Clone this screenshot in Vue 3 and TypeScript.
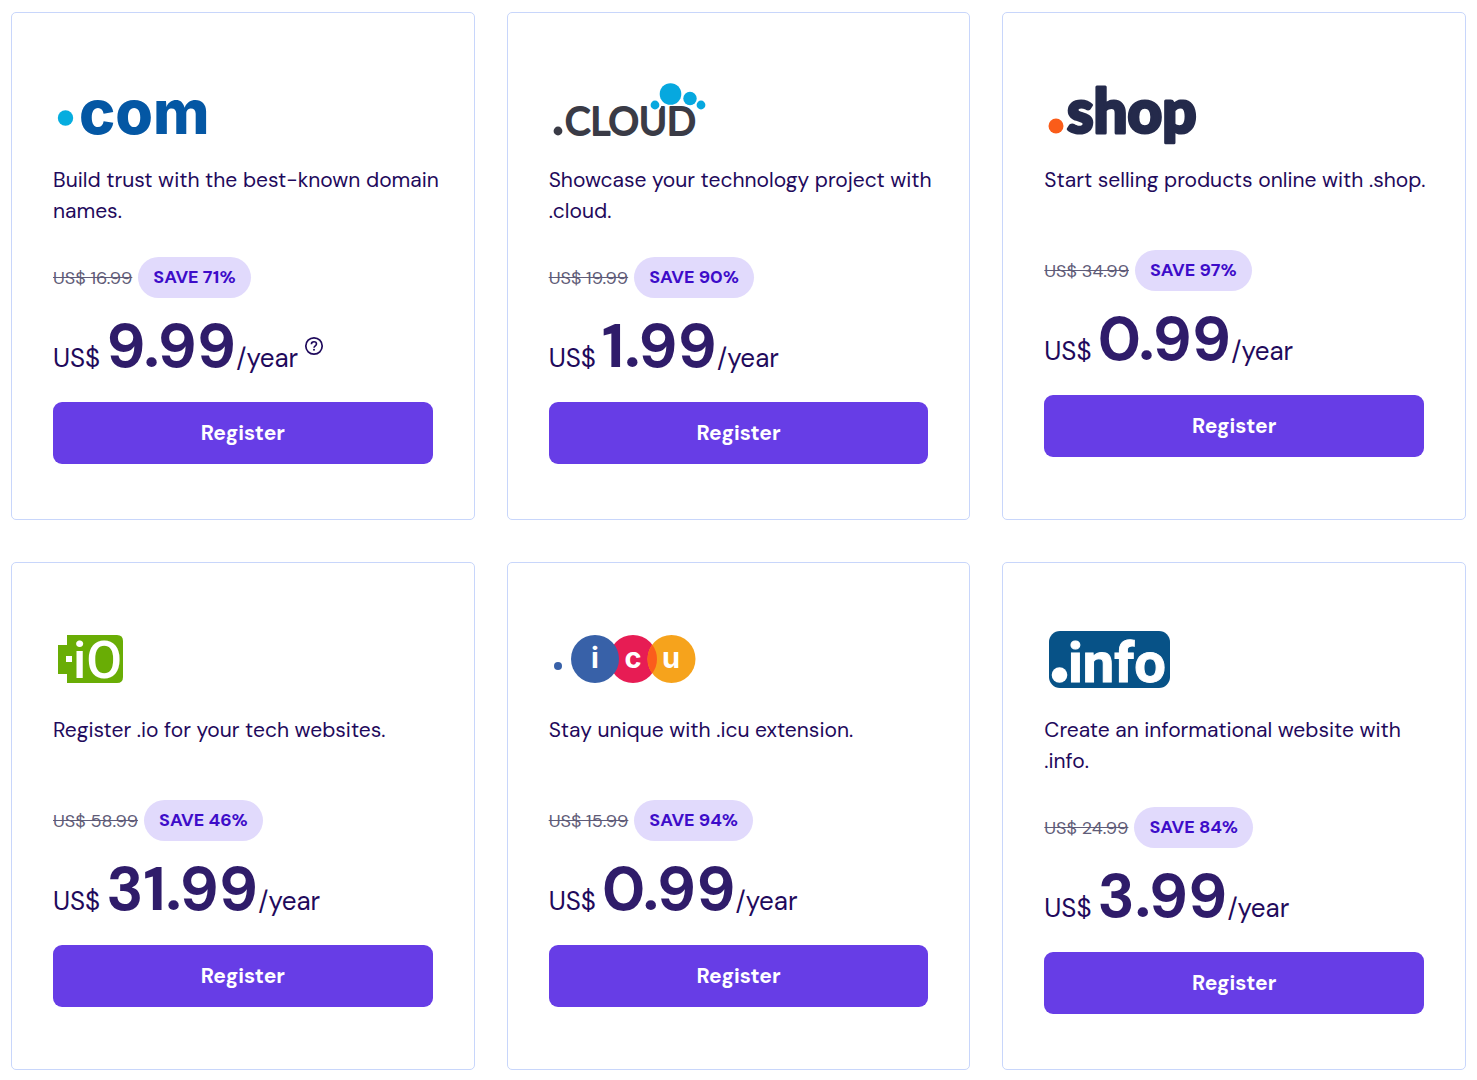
<script setup lang="ts">
interface Offer {
  tld: string
  text: string
  oldPrice: string
  save: string
  price: string
  help?: boolean
}

const offers: Offer[] = [
  { tld: 'com', text: 'Build trust with the best-known domain names.', oldPrice: '16.99', save: '71', price: '9.99', help: true },
  { tld: 'cloud', text: 'Showcase your technology project with .cloud.', oldPrice: '19.99', save: '90', price: '1.99' },
  { tld: 'shop', text: 'Start selling products online with .shop.', oldPrice: '34.99', save: '97', price: '0.99' },
  { tld: 'io', text: 'Register .io for your tech websites.', oldPrice: '58.99', save: '46', price: '31.99' },
  { tld: 'icu', text: 'Stay unique with .icu extension.', oldPrice: '15.99', save: '94', price: '0.99' },
  { tld: 'info', text: 'Create an informational website with .info.', oldPrice: '24.99', save: '84', price: '3.99' },
]
</script>

<template>
  <main class="grid">
    <article v-for="offer in offers" :key="offer.tld" class="card">
      <svg class="logo" viewBox="0 0 200 74" role="img" :aria-label="'.' + offer.tld">
        <g v-if="offer.tld === 'com'">
          <circle cx="12.5" cy="38" r="7.7" fill="#06addf" />
          <text x="26" y="54" class="logo-com">com</text>
        </g>
        <g v-else-if="offer.tld === 'cloud'">
          <circle cx="9" cy="51" r="4.4" fill="#3a3b46" />
          <text x="16" y="55" class="logo-cloud">CLOUD</text>
          <circle cx="106" cy="25" r="5.4" fill="#06a8df" stroke="#fff" stroke-width="2" />
          <circle cx="121.5" cy="14" r="10.8" fill="#06a8df" />
          <circle cx="141" cy="18.5" r="6.7" fill="#06a8df" />
          <circle cx="152" cy="25" r="4.4" fill="#06a8df" />
        </g>
        <g v-else-if="offer.tld === 'shop'">
          <circle cx="12" cy="46" r="7.5" fill="#fa5c19" />
          <text x="23" y="53" class="logo-shop">shop</text>
        </g>
        <g v-else-if="offer.tld === 'io'">
          <path d="M14 5H64Q70 5 70 11V47Q70 53 64 53H14V44H5V15H14Z" fill="#69ad05" />
          <rect x="13" y="26" width="6" height="6" fill="#fff" />
          <text x="20" y="48" class="logo-io">iO</text>
        </g>
        <g v-else-if="offer.tld === 'icu'">
          <circle cx="9" cy="36" r="4" fill="#3861a8" />
          <circle cx="84" cy="29" r="24" fill="#e71c54" />
          <circle cx="122.5" cy="29" r="24" fill="#f6a31c" />
          <path d="M103.25 14.7A24 24 0 0 1 103.25 43.3A24 24 0 0 1 103.25 14.7Z" fill="#fb5d1c" />
          <circle cx="46" cy="29" r="24" fill="#3861a8" />
          <text x="46" y="38" class="logo-icu">i</text>
          <text x="84" y="38" class="logo-icu">c</text>
          <text x="122" y="38" class="logo-icu">u</text>
        </g>
        <g v-else>
          <rect x="5" y="1" width="121" height="57" rx="11" fill="#075287" />
          <circle cx="15.5" cy="45" r="7.8" fill="#fff" />
          <text x="24" y="52" class="logo-info">info</text>
        </g>
      </svg>

      <p class="text">{{ offer.text }}</p>

      <div class="saving">
        <s class="old">US$ {{ offer.oldPrice }}</s>
        <span class="pill">SAVE {{ offer.save }}%</span>
      </div>

      <div class="price">
        <span class="unit">US$</span>
        <strong class="amount">{{ offer.price }}</strong>
        <span class="unit">/year</span>
        <button v-if="offer.help" type="button" class="help" aria-label="Price details">
          <svg viewBox="0 0 20 20" width="20" height="20" fill="none" stroke="#1f0a5c">
            <circle cx="10" cy="10" r="8.2" stroke-width="1.7" />
            <path d="M7.4 8.3C7.4 6.7 8.5 5.8 10 5.8S12.5 6.8 12.5 8C12.5 9.7 10 9.9 10 11.7" stroke-width="1.6" />
            <circle cx="10" cy="13.7" r="1" fill="#1f0a5c" stroke="none" />
          </svg>
        </button>
      </div>

      <button type="button" class="register">Register</button>
    </article>
  </main>
</template>

<style>
body {
  margin: 0;
  background: #fff;
}
</style>

<style scoped>
.grid {
  display: grid;
  grid-template-columns: repeat(3, minmax(0, 1fr));
  gap: 42px 32px;
  padding: 12px 11px 10px;
  font-family: "DM Sans", Inter, sans-serif;
  color: #1f0a5c;
}

.card {
  display: flex;
  flex-direction: column;
  padding: 67px 41px 55px;
  border: 1px solid #c8d6fb;
  border-radius: 5px;
}

.logo {
  display: block;
  width: 200px;
  height: 74px;
  overflow: visible;
}

.logo-com {
  font: 800 61px Inter, sans-serif;
  fill: #0457a4;
}

.logo-cloud {
  font: 400 38px Lato, sans-serif;
  fill: #3a3b46;
  stroke: #3a3b46;
  stroke-width: 2px;
  stroke-linejoin: round;
}

.logo-shop {
  font: 900 60px Lato, sans-serif;
  fill: #242a4b;
  stroke: #242a4b;
  stroke-width: 3px;
  stroke-linejoin: round;
}

.logo-io {
  font: 500 52px Roboto, sans-serif;
  fill: #fff;
}

.logo-icu {
  font: 700 29px Inter, sans-serif;
  fill: #fff;
  text-anchor: middle;
}

.logo-info {
  font: 700 56px Roboto, sans-serif;
  fill: #fff;
  stroke: #fff;
  stroke-width: 1px;
}

.text {
  margin: 11px -8px 30px 0;
  min-height: 55px;
  font-size: 21px;
  line-height: 31px;
}

.saving {
  display: flex;
  align-items: center;
  gap: 6px;
}

.old {
  font-size: 18px;
  color: #5f5c78;
}

.pill {
  padding: 0 15px;
  border-radius: 21px;
  background: #e1dafc;
  color: #3d0cc9;
  font-size: 18px;
  font-weight: 700;
  line-height: 41px;
}

.price {
  display: flex;
  align-items: baseline;
  margin: 12px 0 20px;
}

.unit {
  font-size: 26px;
}

.amount {
  margin-left: 6px;
  color: #2f1c6a;
  font-size: 62px;
  font-weight: 700;
  line-height: 72px;
}

.help {
  align-self: center;
  margin-left: 6px;
  padding: 0;
  border: 0;
  background: none;
  cursor: pointer;
}

.help svg {
  display: block;
}

.register {
  height: 62px;
  border: 0;
  border-radius: 9px;
  background: #673de6;
  color: #fff;
  font: inherit;
  font-size: 21px;
  font-weight: 700;
  cursor: pointer;
}
</style>
